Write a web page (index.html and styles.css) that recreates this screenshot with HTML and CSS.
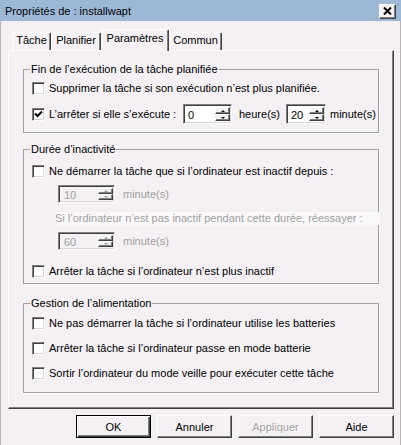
FILE: index.html
```html
<!DOCTYPE html>
<html lang="fr">
<head>
<meta charset="utf-8">
<title>Propriétés de : installwapt</title>
<link rel="stylesheet" href="styles.css">
</head>
<body>
<div class="window">
  <div class="titlebar">
    <span class="title">Propriétés de : installwapt</span>
    <span class="close"><svg width="9" height="8" viewBox="0 0 9 8"><path d="M1 0.5L8 7.5M8 0.5L1 7.5" stroke="#000" stroke-width="2" fill="none"/></svg></span>
  </div>
  <div class="content">
    <div class="tabs">
      <div class="tab w1">Tâche</div>
      <div class="tab w2">Planifier</div>
      <div class="tab sel w3">Paramètres</div>
      <div class="tab w4">Commun</div>
    </div>
    <div class="panel">
      <fieldset class="group g1">
        <legend>Fin de l’exécution de la tâche planifiée</legend>
        <div class="row first"><span class="cb"></span><span class="lbl">Supprimer la tâche si son exécution n’est plus planifiée.</span></div>
        <div class="row r2">
          <span class="cb"><svg width="9" height="9" viewBox="0 0 9 9"><path d="M1 3.5L3.5 6L8 1.5" stroke="#000" stroke-width="2" fill="none"/></svg></span>
          <span class="lbl fixA">L’arrêter si elle s’exécute :</span>
          <span class="spin s1"><span class="val">0</span><span class="btns"><span class="sb"><i class="up"></i></span><span class="sb"><i class="dn"></i></span></span></span>
          <span class="lbl fixB">heure(s)</span>
          <span class="spin s2"><span class="val">20</span><span class="btns"><span class="sb"><i class="up"></i></span><span class="sb"><i class="dn"></i></span></span></span>
          <span class="lbl unit2">minute(s)</span>
        </div>
      </fieldset>

      <fieldset class="group g2">
        <legend>Durée d’inactivité</legend>
        <div class="row first"><span class="cb"></span><span class="lbl">Ne démarrer la tâche que si l’ordinateur est inactif depuis :</span></div>
        <div class="srow sr1">
          <span class="spin dis"><span class="val">10</span><span class="btns"><span class="sb"><i class="up"></i></span><span class="sb"><i class="dn"></i></span></span></span>
          <span class="lbl unit">minute(s)</span>
        </div>
        <div class="note">Si l’ordinateur n’est pas inactif pendant cette durée, réessayer :</div>
        <div class="srow sr2">
          <span class="spin dis"><span class="val">60</span><span class="btns"><span class="sb"><i class="up"></i></span><span class="sb"><i class="dn"></i></span></span></span>
          <span class="lbl unit">minute(s)</span>
        </div>
        <div class="row last"><span class="cb"></span><span class="lbl">Arrêter la tâche si l’ordinateur n’est plus inactif</span></div>
      </fieldset>

      <fieldset class="group g3">
        <legend>Gestion de l’alimentation</legend>
        <div class="row first"><span class="cb"></span><span class="lbl">Ne pas démarrer la tâche si l’ordinateur utilise les batteries</span></div>
        <div class="row"><span class="cb"></span><span class="lbl">Arrêter la tâche si l’ordinateur passe en mode batterie</span></div>
        <div class="row"><span class="cb"></span><span class="lbl">Sortir l’ordinateur du mode veille pour exécuter cette tâche</span></div>
      </fieldset>
    </div>
    <div class="buttons">
      <span class="btn def">OK</span>
      <span class="btn">Annuler</span>
      <span class="btn disabled">Appliquer</span>
      <span class="btn">Aide</span>
    </div>
  </div>
</div>
</body>
</html>
```

FILE: styles.css
```css
* { box-sizing: border-box; }
html, body { margin: 0; padding: 0; }
body {
  width: 401px;
  height: 445px;
  overflow: hidden;
  background: #f4f0f4;
  font-family: "Liberation Sans", Arial, sans-serif;
  font-size: 11px;
  color: #000;
}
.window { height: 445px; display: flex; flex-direction: column; }

.titlebar {
  height: 21px;
  flex: none;
  background: #9db8d6;
  display: flex;
  align-items: center;
  justify-content: space-between;
  padding: 1px 5px 0 5px;
}
.title { font-size: 11px; line-height: 13px; }
.close {
  width: 17px;
  height: 15px;
  display: flex;
  align-items: center;
  justify-content: center;
  background: #f4f0f4;
  border: 1px solid;
  border-color: #fff #404040 #404040 #fff;
  box-shadow: inset -1px -1px 0 #808080;
}

.content {
  flex: 1;
  border-left: 1px solid #b8b4b8;
  border-right: 1px solid #b8b4b8;
  padding: 8px 6px 0 7px;
}

.tabs {
  display: flex;
  align-items: flex-end;
  padding-left: 4px;
  height: 21px;
  position: relative;
  z-index: 2;
}
.tab {
  height: 18px;
  line-height: 15px;
  text-align: center;
  border-top: 1px solid #fff;
  border-left: 1px solid #fff;
  border-right: 1px solid #404040;
  box-shadow: inset -1px 0 0 #808080;
  border-radius: 2px 2px 0 0;
  background: #f4f0f4;
}
.w1 { width: 39px; }
.w2 { width: 50px; }
.w3 { width: 68px; }
.w4 { width: 53px; }
.tab.sel {
  height: 22px;
  margin-bottom: -1px;
  line-height: 17px;
}

.panel {
  border-top: 1px solid #fff;
  border-left: 1px solid #fff;
  border-right: 1px solid #404040;
  border-bottom: 1px solid #404040;
  box-shadow: inset -1px -1px 0 #808080;
  padding: 12px 14px 15px 14px;
}

.group {
  margin: 0;
  padding: 0;
  min-width: 0;
  border: 1px solid #a0a0a0;
  box-shadow: 1px 1px 0 #fff;
  display: flex;
  flex-direction: column;
}
.group legend {
  margin-left: 6px;
  padding: 0 1px;
  line-height: 13px;
  background: #f4f0f4;
}
.g1 { padding-bottom: 8px; }
.g1 .first { margin-top: 2px; }
.g1 .r2 { margin-top: 6px; }
.g2 { margin-top: 10px; padding-bottom: 2px; }
.g2 .first { margin-top: 5px; }
.g3 { margin-top: 13px; padding-bottom: 9px; }
.g3 .row { margin-top: 5px; }
.g3 .row.first { margin-top: 3px; }

.row {
  display: flex;
  align-items: center;
  height: 20px;
  padding-left: 8px;
  white-space: nowrap;
}
.cb {
  flex: none;
  width: 13px;
  height: 13px;
  margin-right: 4px;
  background: #fff;
  border: 1px solid;
  border-color: #808080 #fff #fff #808080;
  box-shadow: inset 1px 1px 0 #404040, inset -1px -1px 0 #d8d4d8;
  display: flex;
  align-items: center;
  justify-content: center;
}
.cb svg { display: block; }
.lbl { line-height: 13px; }
.fixA { width: 134px; flex: none; }
.fixB { width: 47px; flex: none; margin-left: 7px; }
.unit2 { margin-left: 4px; }

.spin {
  flex: none;
  display: flex;
  height: 20px;
  background: #fff;
  border: 1px solid;
  border-color: #808080 #fff #fff #808080;
  box-shadow: inset 1px 1px 0 #404040, inset -1px -1px 0 #d8d4d8;
  padding: 2px 1px 2px 2px;
}
.s1 { width: 49px; }
.s2 { width: 40px; }
.spin .val {
  flex: 1;
  padding-left: 2px;
  line-height: 16px;
}
.btns { width: 15px; display: flex; flex-direction: column; }
.sb {
  flex: 1;
  background: #f4f0f4;
  border: 1px solid;
  border-color: #fff #404040 #404040 #fff;
  box-shadow: inset -1px -1px 0 #808080;
  display: flex;
  align-items: center;
  justify-content: center;
}
.sb i {
  display: block;
  width: 0;
  height: 0;
  border-left: 2px solid transparent;
  border-right: 2px solid transparent;
}
.sb .up { border-bottom: 2px solid #000; }
.sb .dn { border-top: 2px solid #000; }

.spin.dis {
  width: 57px;
  height: 18px;
  background: #f4f0f4;
  color: #a0a0a0;
  padding-top: 2px;
}
.spin.dis .val { line-height: 14px; padding-left: 3px; }
.spin.dis .sb .up { border-bottom-color: #a0a0a0; }
.spin.dis .sb .dn { border-top-color: #a0a0a0; }

.srow {
  display: flex;
  align-items: center;
  height: 18px;
  padding-left: 34px;
  color: #a0a0a0;
}
.srow .unit { margin-left: 8px; }
.sr1 { margin-top: 4px; }
.note {
  margin-top: 9px;
  margin-left: 31px;
  margin-right: -2px;
  height: 13px;
  line-height: 13px;
  color: #a0a0a0;
  background: #faf8fa;
  white-space: nowrap;
}
.sr2 { margin-top: 7px; }
.g2 .last { margin-top: 11px; }

.buttons {
  display: flex;
  justify-content: flex-end;
  gap: 6px;
  margin-top: 6px;
}
.btn {
  width: 75px;
  height: 23px;
  display: flex;
  align-items: center;
  justify-content: center;
  border: 1px solid;
  border-color: #fff #404040 #404040 #fff;
  box-shadow: inset -1px -1px 0 #808080;
}
.btn.def {
  border-color: #000;
  box-shadow: inset 1px 1px 0 #fff, inset -1px -1px 0 #404040, inset -2px -2px 0 #808080;
}
.btn.disabled { color: #a0a0a0; text-shadow: 1px 1px 0 #fff; }
```
